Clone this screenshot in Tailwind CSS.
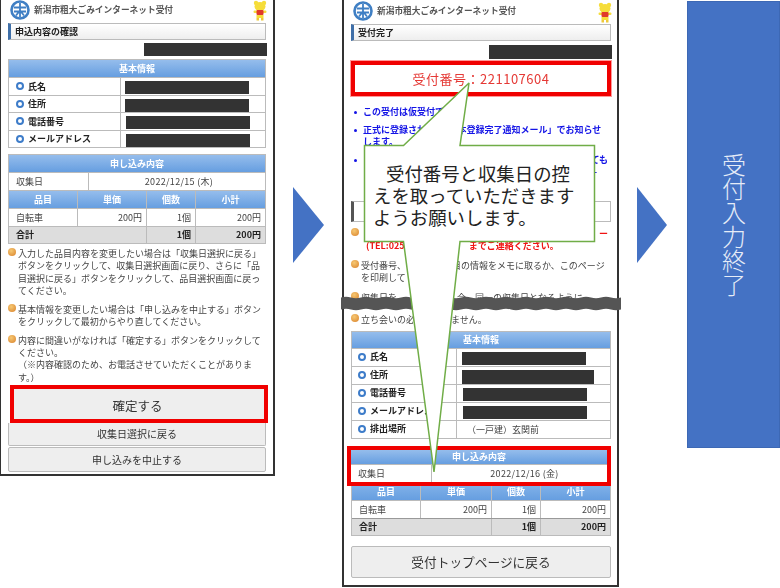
<!doctype html>
<html lang="ja">
<head>
<meta charset="utf-8">
<script src="https://cdn.jsdelivr.net/npm/@tailwindcss/browser@4"></script>
</head>
<body class="relative w-[780px] h-[588px] overflow-hidden bg-white text-[#333] font-['Noto_Sans_CJK_JP','Noto_Sans',sans-serif]">

<!-- Left phone screenshot -->
<section class="absolute left-[-1px] top-[-2px] w-[276px] h-[478px] border-2 border-[#333] bg-white px-[7px] blur-[0.35px] flex flex-col">
  <header class="h-[23px] flex items-center shrink-0 relative">
    <svg class="ml-[2px] mt-[-3px]" width="20" height="20" viewBox="0 0 20 20" fill="none" stroke="#3f7fc4"><circle cx="10" cy="10" r="8.500" stroke-width="2.600"/><path d="M4 7.500h12M4 11.500h12M10 3v14M6 15.500l4-5 4 5" stroke-width="1.800"/></svg>
    <span class="ml-[4px] mt-[-2px] text-[8.7px] leading-none font-bold text-[#555]">新潟市粗大ごみインターネット受付</span>
    <svg class="absolute right-[-2px] top-[0px]" width="16" height="21" viewBox="0 0 16 21"><circle cx="4" cy="3" r="2.200" fill="#f6dd3a"/><circle cx="12" cy="3" r="2.200" fill="#f6dd3a"/><ellipse cx="8" cy="6.500" rx="5.500" ry="4.500" fill="#f6dd3a"/><rect x="1.500" y="10.500" width="13" height="2.500" rx="1.200" fill="#f6dd3a"/><rect x="4.500" y="10" width="7" height="5" rx="1" fill="#e0392b"/><rect x="4.500" y="15" width="7" height="3" fill="#f6dd3a"/><rect x="4.500" y="18" width="2.500" height="2.500" fill="#eec93a"/><rect x="9" y="18" width="2.500" height="2.500" fill="#eec93a"/></svg>
  </header>
  <h2 class="h-[17px] shrink-0 border border-[#bbb] border-l-[3px] border-l-[#3f6fa8] bg-gradient-to-b from-white to-[#eee] pl-[4px] text-[9px] leading-[15px] font-bold text-[#222]">申込内容の確認</h2>
  <div class="self-end shrink-0 mt-[3px] mr-[-1px] w-[123px] h-[13px] bg-[#333]"></div>

  <div class="mt-[3px] border border-[#bbb] shrink-0">
    <div class="h-[17px] bg-gradient-to-b from-[#95bdec] to-[#669ee0] text-white text-center font-bold text-[9px] leading-[17px]">基本情報</div>
    <div class="h-[17.500px] flex border-t border-[#bbb]"><div class="w-[112px] border-r border-[#bbb] flex items-center pl-[7px] gap-[4px] text-[9px] font-bold text-[#222]"><i class="size-[8px] rounded-full border-2 border-[#3d7cc9]"></i>氏名</div><div class="pl-[4px] pt-[3px]"><div class="w-[124px] h-[13px] bg-[#333]"></div></div></div>
    <div class="h-[17.500px] flex border-t border-[#bbb]"><div class="w-[112px] border-r border-[#bbb] flex items-center pl-[7px] gap-[4px] text-[9px] font-bold text-[#222]"><i class="size-[8px] rounded-full border-2 border-[#3d7cc9]"></i>住所</div><div class="pl-[4px] pt-[3px]"><div class="w-[124px] h-[13px] bg-[#333]"></div></div></div>
    <div class="h-[17.500px] flex border-t border-[#bbb]"><div class="w-[112px] border-r border-[#bbb] flex items-center pl-[7px] gap-[4px] text-[9px] font-bold text-[#222]"><i class="size-[8px] rounded-full border-2 border-[#3d7cc9]"></i>電話番号</div><div class="pl-[5px] pt-[3px]"><div class="w-[124px] h-[13px] bg-[#333]"></div></div></div>
    <div class="h-[17.500px] flex border-t border-[#bbb]"><div class="w-[112px] border-r border-[#bbb] flex items-center pl-[7px] gap-[4px] text-[9px] font-bold text-[#222]"><i class="size-[8px] rounded-full border-2 border-[#3d7cc9]"></i>メールアドレス</div><div class="pl-[5px] pt-[3px]"><div class="w-[124px] h-[13px] bg-[#333]"></div></div></div>
  </div>

  <div class="mt-[6px] border border-[#bbb] shrink-0 text-[9px] text-[#444]">
    <div class="h-[17px] bg-gradient-to-b from-[#95bdec] to-[#669ee0] text-white text-center font-bold leading-[17px]">申し込み内容</div>
    <div class="h-[18px] flex border-t border-[#bbb] leading-[17px]"><div class="w-[80px] border-r border-[#bbb] pl-[7px]">収集日</div><div class="flex-1 text-center tracking-[0.3px] pl-[4px]">2022/12/15 (木)</div></div>
    <div class="h-[18px] grid grid-cols-[69px_69px_49px_1fr] border-t border-[#bbb] bg-gradient-to-b from-[#95bdec] to-[#669ee0] text-white text-center font-bold leading-[17px]"><div class="border-r border-[#bbb]">品目</div><div class="border-r border-[#bbb]">単価</div><div class="border-r border-[#bbb]">個数</div><div>小計</div></div>
    <div class="h-[18px] grid grid-cols-[69px_69px_49px_1fr] border-t border-[#bbb] text-right leading-[17px]"><div class="border-r border-[#bbb] text-left pl-[7px]">自転車</div><div class="border-r border-[#bbb] pr-[4px]">200円</div><div class="border-r border-[#bbb] pr-[4px]">1個</div><div class="pr-[4px]">200円</div></div>
    <div class="h-[17px] grid grid-cols-[138px_49px_1fr] border-t border-[#bbb] bg-[#ddd] text-right font-bold leading-[16px] text-[#222]"><div class="border-r border-[#bbb] text-left pl-[7px]">合計</div><div class="border-r border-[#bbb] pr-[4px]">1個</div><div class="pr-[4px]">200円</div></div>
  </div>

  <div class="mt-[4px] shrink-0 text-[9px] leading-[12.3px] text-[#444] flex flex-col gap-[6.500px] pl-[10px] pr-[5px] relative">
    <p class="relative"><i class="absolute left-[-10px] top-[0px] size-[8px] rounded-full bg-[radial-gradient(circle_at_40%_35%,#f6c873,#d9812a)]"></i>入力した品目内容を変更したい場合は「収集日選択に戻る」ボタンをクリックして、収集日選択画面に戻り、さらに「品目選択に戻る」ボタンをクリックして、品目選択画面に戻ってください。</p>
    <p class="relative"><i class="absolute left-[-10px] top-[0px] size-[8px] rounded-full bg-[radial-gradient(circle_at_40%_35%,#f6c873,#d9812a)]"></i>基本情報を変更したい場合は「申し込みを中止する」ボタンをクリックして最初からやり直してください。</p>
    <p class="relative"><i class="absolute left-[-10px] top-[0px] size-[8px] rounded-full bg-[radial-gradient(circle_at_40%_35%,#f6c873,#d9812a)]"></i>内容に間違いがなければ「確定する」ボタンをクリックしてください。<br>（※内容確認のため、お電話させていただくことがあります。）</p>
  </div>

  <div class="mt-[1px] ml-[2px] h-[38px] w-[258px] shrink-0 border-[4px] border-[#f00000] bg-[#eee] pr-[3px] text-center text-[12.500px] leading-[30px] pt-[2px] text-[#333]">確定する</div>
  <div class="h-[23px] shrink-0 rounded-b-[2px] border border-t-0 border-[#bbb] bg-[#eee] text-center text-[10px] leading-[22px] text-[#333]">収集日選択に戻る</div>
  <div class="mt-[1px] h-[25px] shrink-0 rounded-[2px] border border-[#bbb] bg-[#eee] text-center text-[10px] leading-[23px] text-[#333]">申し込みを中止する</div>
</section>

<!-- Arrow 1 -->
<svg class="absolute left-[293px] top-[187px]" width="32" height="76" viewBox="0 0 32 76"><path d="M0 0l31 38L0 76z" fill="#4472c4"/></svg>

<!-- Middle phone screenshot -->
<section class="absolute left-[342px] top-[-2px] w-[277px] h-[589px] border-2 border-[#333] bg-white pl-[7px] pr-[6px] blur-[0.35px] flex flex-col">
  <header class="h-[24px] flex items-center shrink-0 relative">
    <svg class="ml-[2px] mt-[-2px]" width="20" height="20" viewBox="0 0 20 20" fill="none" stroke="#3f7fc4"><circle cx="10" cy="10" r="8.500" stroke-width="2.600"/><path d="M4 7.500h12M4 11.500h12M10 3v14M6 15.500l4-5 4 5" stroke-width="1.800"/></svg>
    <span class="ml-[4px] mt-[-2px] text-[8.7px] leading-none font-bold text-[#555]">新潟市粗大ごみインターネット受付</span>
    <svg class="absolute right-[-2px] top-[2px]" width="16" height="21" viewBox="0 0 16 21"><circle cx="4" cy="3" r="2.200" fill="#f6dd3a"/><circle cx="12" cy="3" r="2.200" fill="#f6dd3a"/><ellipse cx="8" cy="6.500" rx="5.500" ry="4.500" fill="#f6dd3a"/><rect x="1.500" y="10.500" width="13" height="2.500" rx="1.200" fill="#f6dd3a"/><rect x="4.500" y="10" width="7" height="5" rx="1" fill="#e0392b"/><rect x="4.500" y="15" width="7" height="3" fill="#f6dd3a"/><rect x="4.500" y="18" width="2.500" height="2.500" fill="#eec93a"/><rect x="9" y="18" width="2.500" height="2.500" fill="#eec93a"/></svg>
  </header>
  <h2 class="h-[17px] shrink-0 border border-[#bbb] border-l-[3px] border-l-[#3f6fa8] bg-gradient-to-b from-white to-[#eee] pl-[4px] text-[9px] leading-[15px] font-bold text-[#222]">受付完了</h2>
  <div class="self-end shrink-0 mt-[4px] mr-[-1px] w-[123px] h-[14px] bg-[#333]"></div>
  <div class="mt-[2px] h-[35px] shrink-0 border-[4px] border-[#f00000] outline-1 outline-[#f99] text-center text-[13px] tracking-[0.5px] leading-[27px] text-[#e53935]">受付番号：221107604</div>

  <ul class="mt-[10px] shrink-0 pl-[12px] pr-[3px] text-[9px] leading-[12.500px] font-bold text-[#1414e6] flex flex-col gap-[5px] relative">
    <li class="relative"><i class="absolute left-[-9px] top-[5px] size-[3px] rounded-full bg-[#1414e6]"></i>この受付は仮受付です。</li>
    <li class="relative"><i class="absolute left-[-9px] top-[5px] size-[3px] rounded-full bg-[#1414e6]"></i>正式に登録されたら、「本登録完了通知メール」でお知らせします。</li>
    <li class="relative h-[37px]"><i class="absolute left-[-9px] top-[5px] size-[3px] rounded-full bg-[#1414e6]"></i><span class="block text-right">ても</span><span class="block text-right pr-[11px]">0-</span></li>
  </ul>
  <div class="mt-[10px] h-[21px] shrink-0 border border-[#bbb] border-l-[3px] border-l-[#555]"></div>

  <div class="mt-[6px] h-[25px] pl-[10px] pr-[3px] text-[9px] leading-[12.500px] font-bold text-[#f01414] relative shrink-0">
    <i class="absolute left-[0px] top-[0px] size-[8px] rounded-full bg-[radial-gradient(circle_at_40%_35%,#f6c873,#d9812a)]"></i>
    <p class="text-right">ー</p>
    <p class="pl-[5px]">(TEL:025<span class="pl-[64px]">までご連絡ください。</span></p>
  </div>
  <div class="mt-[7px] h-[25px] pl-[10px] pr-[3px] text-[9px] leading-[12.500px] text-[#444] relative shrink-0">
    <i class="absolute left-[0px] top-[0px] size-[8px] rounded-full bg-[radial-gradient(circle_at_40%_35%,#f6c873,#d9812a)]"></i>
    <p>受付番号、<span class="pl-[46px]">目の情報をメモに取るか、このページ</span></p>
    <p>を印刷して</p>
  </div>
  <div class="mt-[7px] h-[14px] overflow-hidden pl-[10px] pr-[3px] text-[9px] leading-[12.500px] text-[#444] relative shrink-0">
    <i class="absolute left-[0px] top-[0px] size-[8px] rounded-full bg-[radial-gradient(circle_at_40%_35%,#f6c873,#d9812a)]"></i>
    <p>収集日を<span class="pl-[60px]">合、同一の収集日となるように</span></p>
  </div>
  <div class="mt-[8px] h-[14px] pl-[10px] pr-[3px] text-[9px] leading-[12.500px] text-[#444] relative shrink-0">
    <i class="absolute left-[0px] top-[0px] size-[8px] rounded-full bg-[radial-gradient(circle_at_40%_35%,#f6c873,#d9812a)]"></i>
    <p>立ち会いの必要はありません。</p>
  </div>

  <div class="mt-[3px] border border-[#bbb] shrink-0">
    <div class="h-[16px] bg-gradient-to-b from-[#95bdec] to-[#669ee0] text-white text-center font-bold text-[9px] leading-[16px]">基本情報</div>
    <div class="h-[18px] flex border-t border-[#bbb]"><div class="w-[105px] border-r border-[#bbb] flex items-center pl-[6px] gap-[4px] text-[9px] font-bold text-[#222]"><i class="size-[8px] rounded-full border-2 border-[#3d7cc9]"></i>氏名</div><div class="pl-[5px] pt-[3px]"><div class="w-[124px] h-[13px] bg-[#333]"></div></div></div>
    <div class="h-[18px] flex border-t border-[#bbb]"><div class="w-[105px] border-r border-[#bbb] flex items-center pl-[6px] gap-[4px] text-[9px] font-bold text-[#222]"><i class="size-[8px] rounded-full border-2 border-[#3d7cc9]"></i>住所</div><div class="pl-[5px] pt-[3px]"><div class="w-[132px] h-[14px] bg-[#333]"></div></div></div>
    <div class="h-[18px] flex border-t border-[#bbb]"><div class="w-[105px] border-r border-[#bbb] flex items-center pl-[6px] gap-[4px] text-[9px] font-bold text-[#222]"><i class="size-[8px] rounded-full border-2 border-[#3d7cc9]"></i>電話番号</div><div class="pl-[6px] pt-[3px]"><div class="w-[124px] h-[13px] bg-[#333]"></div></div></div>
    <div class="h-[18px] flex border-t border-[#bbb]"><div class="w-[105px] border-r border-[#bbb] flex items-center pl-[6px] gap-[4px] text-[9px] font-bold text-[#222]"><i class="size-[8px] rounded-full border-2 border-[#3d7cc9]"></i>メールアドレス</div><div class="pl-[6px] pt-[3px]"><div class="w-[124px] h-[13px] bg-[#333]"></div></div></div>
    <div class="h-[18px] flex border-t border-[#bbb]"><div class="w-[105px] border-r border-[#bbb] flex items-center pl-[6px] gap-[4px] text-[9px] font-bold text-[#222]"><i class="size-[8px] rounded-full border-2 border-[#3d7cc9]"></i>排出場所</div><div class="pl-[10px] text-[9px] leading-[17px] text-[#444]">（一戸建）玄関前</div></div>
  </div>

  <div class="mt-[7px] ml-[-4px] h-[40px] shrink-0 border-[4px] border-[#f00000] text-[9px] text-[#444]">
    <div class="h-[14px] bg-gradient-to-b from-[#95bdec] to-[#669ee0] text-white text-center font-bold leading-[14px]">申し込み内容</div>
    <div class="h-[18px] flex border-t border-[#bbb] leading-[17px]"><div class="w-[81px] border-r border-[#bbb] pl-[7px]">収集日</div><div class="flex-1 text-center tracking-[0.3px] pl-[10px]">2022/12/16 (金)</div></div>
  </div>
  <div class="border border-t-0 border-[#bbb] shrink-0 text-[9px] text-[#444]">
    <div class="h-[14px] grid grid-cols-[69px_71px_49px_1fr] bg-gradient-to-b from-[#7fb0e8] to-[#669ee0] text-white text-center font-bold leading-[11px]"><div class="border-r border-[#bbb]">品目</div><div class="border-r border-[#bbb]">単価</div><div class="border-r border-[#bbb]">個数</div><div>小計</div></div>
    <div class="h-[18px] grid grid-cols-[69px_71px_49px_1fr] border-t border-[#bbb] text-right leading-[17px]"><div class="border-r border-[#bbb] text-left pl-[7px]">自転車</div><div class="border-r border-[#bbb] pr-[4px]">200円</div><div class="border-r border-[#bbb] pr-[4px]">1個</div><div class="pr-[4px]">200円</div></div>
    <div class="h-[17px] grid grid-cols-[140px_49px_1fr] border-t border-[#999] bg-[#ddd] text-right font-bold leading-[16px] text-[#222]"><div class="border-r border-[#bbb] text-left pl-[7px]">合計</div><div class="border-r border-[#bbb] pr-[4px]">1個</div><div class="pr-[4px]">200円</div></div>
  </div>
  <div class="mt-[10px] h-[32px] shrink-0 rounded-[2px] border border-[#bbb] bg-[#eee] text-center text-[12.700px] leading-[30px] text-[#333]">受付トップページに戻る</div>
</section>

<!-- Torn-page band across the middle phone -->
<svg class="absolute left-[341px] top-[296px]" width="280" height="15" viewBox="0 0 280 15"><path d="M0 1.500q5-1.500 10 0t10 0 10 0 10 0 10 0 10 0 10 0 10 0 10 0 10 0 10 0 10 0 10 0 10 0 10 0 10 0 10 0 10 0 10 0 10 0 10 0 10 0 10 0 10 0 10 0 10 0 10 0 10 0V13.500q-5 1.500-10 0t-10 0-10 0-10 0-10 0-10 0-10 0-10 0-10 0-10 0-10 0-10 0-10 0-10 0-10 0-10 0-10 0-10 0-10 0-10 0-10 0-10 0-10 0-10 0-10 0-10 0-10 0-10 0z" fill="#555"/></svg>

<!-- Callout over the middle phone -->
<svg class="absolute left-[360px] top-[80px]" width="240" height="396" viewBox="0 0 240 396"><path d="M4.500 65.500H43.500L109 3 100 65.500H234.500V161.500H100L74 392 43.500 161.500H4.500z" fill="#fff" stroke="#70ad47" stroke-width="1.500" stroke-miterlimit="2"/></svg>
<p class="absolute left-[373px] top-[162px] w-[212px] text-[18.400px] leading-[22px] text-[#222] indent-[13px]">受付番号と収集日の控えを取っていただきますようお願いします。</p>

<!-- Arrow 2 -->
<svg class="absolute left-[637px] top-[187px]" width="31" height="76" viewBox="0 0 31 76"><path d="M0 0l30 38L0 76z" fill="#4472c4"/></svg>

<!-- End block -->
<div class="absolute left-[687px] top-[1px] w-[93px] h-[447px] bg-[#4472c4] border border-[#3d68b4] flex items-center justify-center">
  <span class="[writing-mode:vertical-rl] text-[24px] leading-none font-light text-[#e6ecf7]">受付入力終了</span>
</div>

</body>
</html>
